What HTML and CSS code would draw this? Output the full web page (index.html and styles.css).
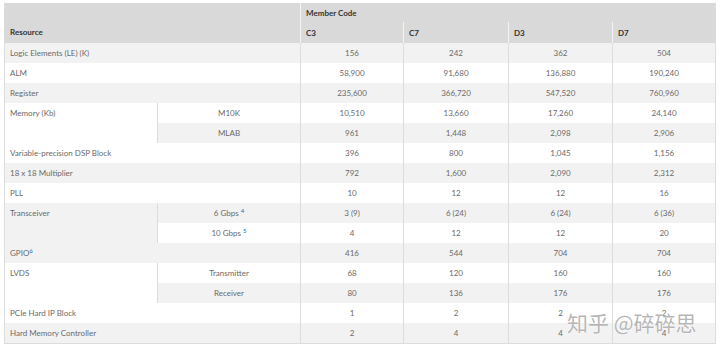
FILE: index.html
```html
<!DOCTYPE html>
<html lang="en">
<head>
    <meta charset="UTF-8">
    <title>Member Code Resources</title>
    <link rel="stylesheet" href="styles.css">
</head>
<body>

<div class="page">
    <table class="spec">
        <colgroup>
            <col class="c-res">
            <col class="c-sub">
            <col class="c-c3">
            <col class="c-c7">
            <col class="c-d3">
            <col class="c-d7">
        </colgroup>
        <thead>
            <tr class="h1">
                <th colspan="2" rowspan="2" class="res">Resource</th>
                <th colspan="4" class="member">Member Code</th>
            </tr>
            <tr class="h2">
                <th>C3</th>
                <th>C7</th>
                <th>D3</th>
                <th>D7</th>
            </tr>
        </thead>
        <tbody>
            <tr>
                <td colspan="2" class="name">Logic Elements (LE) (K)</td>
                <td>156</td><td>242</td><td>362</td><td>504</td>
            </tr>
            <tr>
                <td colspan="2" class="name">ALM</td>
                <td>58,900</td><td>91,680</td><td>136,880</td><td>190,240</td>
            </tr>
            <tr>
                <td colspan="2" class="name">Register</td>
                <td>235,600</td><td>366,720</td><td>547,520</td><td>760,960</td>
            </tr>
            <tr>
                <td rowspan="2" class="name group">Memory (Kb)</td>
                <td class="sub">M10K</td>
                <td>10,510</td><td>13,660</td><td>17,260</td><td>24,140</td>
            </tr>
            <tr>
                <td class="sub">MLAB</td>
                <td>961</td><td>1,448</td><td>2,098</td><td>2,906</td>
            </tr>
            <tr>
                <td colspan="2" class="name">Variable-precision DSP Block</td>
                <td>396</td><td>800</td><td>1,045</td><td>1,156</td>
            </tr>
            <tr>
                <td colspan="2" class="name">18 x 18 Multiplier</td>
                <td>792</td><td>1,600</td><td>2,090</td><td>2,312</td>
            </tr>
            <tr>
                <td colspan="2" class="name">PLL</td>
                <td>10</td><td>12</td><td>12</td><td>16</td>
            </tr>
            <tr>
                <td rowspan="2" class="name group">Transceiver</td>
                <td class="sub">6 Gbps <sup>4</sup></td>
                <td>3 (9)</td><td>6 (24)</td><td>6 (24)</td><td>6 (36)</td>
            </tr>
            <tr>
                <td class="sub">10 Gbps <sup>5</sup></td>
                <td>4</td><td>12</td><td>12</td><td>20</td>
            </tr>
            <tr>
                <td colspan="2" class="name">GPIO<sup>6</sup></td>
                <td>416</td><td>544</td><td>704</td><td>704</td>
            </tr>
            <tr>
                <td rowspan="2" class="name group">LVDS</td>
                <td class="sub">Transmitter</td>
                <td>68</td><td>120</td><td>160</td><td>160</td>
            </tr>
            <tr>
                <td class="sub">Receiver</td>
                <td>80</td><td>136</td><td>176</td><td>176</td>
            </tr>
            <tr>
                <td colspan="2" class="name">PCIe Hard IP Block</td>
                <td>1</td><td>2</td><td>2</td><td>2</td>
            </tr>
            <tr>
                <td colspan="2" class="name">Hard Memory Controller</td>
                <td>2</td><td>4</td><td>4</td><td>4</td>
            </tr>
        </tbody>
    </table>

    <div class="watermark">知乎 @碎碎思</div>
</div>

</body>
</html>
```

FILE: styles.css
```css
:root {
    --head-bg: #d9d9d9;
    --stripe: #f2f2f2;
    --line: #dcdcdc;
    --text: #6a6a6a;
    --head-text: #333333;
    --link: #0071c5;
}

* {
    margin: 0;
    padding: 0;
    box-sizing: border-box;
}

body {
    background: #ffffff;
    font-family: Lato, "Open Sans", sans-serif;
    font-size: 8px;
    color: var(--text);
}

.page {
    position: relative;
    padding: 3px 5px 0 4px;
}

/* Spec table */
.spec {
    width: 711px;
    table-layout: fixed;
    border-collapse: collapse;
    border-left: 1px solid var(--line);
    border-right: 1px solid var(--line);
    border-bottom: 1px solid var(--line);
}

.c-res { width: 153px; }
.c-sub { width: 143px; }
.c-c3 { width: 103px; }
.c-c7 { width: 105px; }
.c-d3 { width: 104px; }
.c-d7 { width: 103px; }

thead th {
    background: var(--head-bg);
    color: var(--head-text);
    font-weight: 700;
    text-align: left;
    vertical-align: middle;
    padding: 0 5px;
    border-left: 1px solid #f4f4f4;
}

thead th.res {
    vertical-align: bottom;
    padding-bottom: 6px;
    border-left: none;
}

.h1 th { height: 19px; }
.h2 th { height: 21px; }

tbody td {
    height: 20px;
    text-align: center;
    vertical-align: middle;
    border-left: 1px solid var(--line);
    padding: 0 5px;
}

tbody tr:nth-child(odd) td {
    background: var(--stripe);
}

tbody td.name {
    text-align: left;
    border-left: none;
}

/* Cells spanning two sub-rows keep their label on the first line */
tbody td.group {
    vertical-align: top;
    line-height: 20px;
}

sup {
    color: var(--link);
    font-size: 6px;
    vertical-align: 3px;
    line-height: 0;
}

/* Watermark overlay */
.watermark {
    position: absolute;
    left: 567px;
    top: 307px;
    font-family: "Noto Sans CJK SC", sans-serif;
    font-size: 21px;
    color: rgba(150, 150, 150, 0.7);
    text-shadow: 0 0 2px #ffffff, 0 0 1px #ffffff;
    white-space: nowrap;
}
```
